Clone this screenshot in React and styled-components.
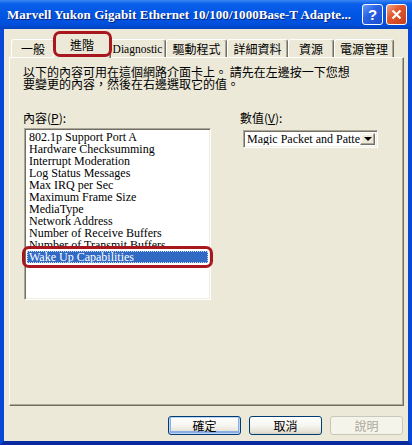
import styled, { createGlobalStyle } from 'styled-components';

const GlobalStyle = createGlobalStyle`
  html, body {
    margin: 0;
    padding: 0;
    background: #ece9d8;
  }
  body {
    font-family: "Noto Sans CJK TC", "Liberation Sans", sans-serif;
  }
`;

const Window = styled.div`
  width: 412px;
  height: 445px;
  display: flex;
  flex-direction: column;
  background: #ece9d8;
`;

const TitleBar = styled.div`
  height: 29px;
  flex: none;
  display: flex;
  align-items: center;
  gap: 3px;
  padding: 0 5px 0 7px;
  box-sizing: border-box;
  background: linear-gradient(
    to bottom,
    #3a86f4 0px,
    #0a5fea 4px,
    #0056e4 14px,
    #0050dc 24px,
    #0142be 29px
  );
`;

const Title = styled.div`
  flex: 1;
  min-width: 0;
  color: #fff;
  font-family: "Liberation Serif", serif;
  font-weight: bold;
  font-size: 13px;
  letter-spacing: 0.05px;
  white-space: nowrap;
  overflow: hidden;
  text-shadow: 1px 1px 0 #0a2478;
`;

const CaptionButton = styled.div`
  width: 21px;
  height: 21px;
  flex: none;
  box-sizing: border-box;
  border: 1px solid #fff;
  border-radius: 3px;
  display: flex;
  align-items: center;
  justify-content: center;
  color: #fff;
  font-family: "Liberation Sans", sans-serif;
  font-weight: bold;
  font-size: 15px;
  background: ${(p) =>
    p.$close
      ? 'linear-gradient(135deg, #f3a488 0%, #e1582f 40%, #c63e19 100%)'
      : 'linear-gradient(135deg, #6c9cf6 0%, #2a62e6 40%, #1a4cd0 100%)'};
`;

const Frame = styled.div`
  flex: 1;
  display: flex;
  flex-direction: column;
  padding: 4px 4px 0 5px;
  border-left: 4px solid #0848d6;
  border-right: 4px solid #0848d6;
  border-bottom: 4px solid #0a2aa0;
`;

const TabStrip = styled.div`
  height: 24px;
  display: flex;
  align-items: flex-end;
  padding-left: 2px;
`;

const Tab = styled.div`
  position: relative;
  box-sizing: border-box;
  width: ${(p) => p.$width + (p.$active ? 4 : 0)}px;
  height: ${(p) => (p.$active ? 25 : 18)}px;
  margin: ${(p) => (p.$active ? '0 -2px -1px' : '0')};
  z-index: ${(p) => (p.$active ? 1 : 0)};
  padding-bottom: ${(p) => (p.$active ? 3 : 0)}px;
  display: flex;
  align-items: center;
  justify-content: center;
  background: #ece9d8;
  border-top: 1px solid #fff;
  border-left: 1px solid #fff;
  border-right: 1px solid #716f64;
  border-radius: 3px 3px 0 0;
  box-shadow: inset -1px 0 0 #aca899;
  font-family: ${(p) =>
    p.$latin ? '"Liberation Serif", serif' : '"Noto Sans CJK TC", sans-serif'};
  font-size: ${(p) => (p.$latin ? 11.5 : 12)}px;
  line-height: 12px;
  color: #000;
  white-space: nowrap;

  ${(p) =>
    p.$marked &&
    `
    &::after {
      content: '';
      position: absolute;
      top: -3px;
      bottom: 1px;
      left: -1px;
      right: -2px;
      border: 3px solid #a8161e;
      border-radius: 7px;
    }
  `}
`;

const Panel = styled.div`
  flex: 1;
  box-sizing: border-box;
  padding: 8px 13px;
  border-top: 1px solid #fff;
  border-left: 1px solid #fff;
  border-right: 1px solid #716f64;
  border-bottom: 1px solid #716f64;
  box-shadow: inset -1px -1px 0 #aca899;
`;

const Intro = styled.p`
  margin: 0;
  font-size: 12px;
  line-height: 12px;
  color: #000;
`;

const Columns = styled.div`
  display: grid;
  grid-template-columns: 188px 1fr;
  column-gap: 29px;
  margin-top: 22px;
`;

const Column = styled.div`
  display: flex;
  flex-direction: column;
  align-items: flex-start;
`;

const Label = styled.div`
  font-size: 12px;
  line-height: 12px;
  color: #000;

  u {
    text-underline-offset: 1px;
  }
`;

const ListBox = styled.div`
  width: 187px;
  height: 172px;
  box-sizing: border-box;
  margin: 4px 0 0 1px;
  padding: 2px;
  background: #fff;
  border-top: 1px solid #aca899;
  border-left: 1px solid #aca899;
  border-right: 1px solid #fff;
  border-bottom: 1px solid #fff;
  box-shadow: inset 1px 1px 0 #716f64, inset -1px -1px 0 #f1efe2;
  display: flex;
  flex-direction: column;
`;

const ListItem = styled.div`
  position: relative;
  height: 12px;
  line-height: 12px;
  padding-left: 2px;
  font-family: "Liberation Serif", serif;
  font-size: 12px;
  white-space: nowrap;
  color: ${(p) => (p.$selected ? '#fff' : '#000')};
  background: ${(p) => (p.$selected ? '#316ac5' : 'transparent')};
  outline: ${(p) => (p.$selected ? '1px dotted #c9d7f0' : 'none')};
  outline-offset: -1px;

  ${(p) =>
    p.$selected &&
    `
    &::after {
      content: '';
      position: absolute;
      top: -5px;
      bottom: -5px;
      left: -5px;
      right: -5px;
      border: 3px solid #a8161e;
      border-radius: 7px;
    }
  `}
`;

const Combo = styled.div`
  width: 135px;
  height: 18px;
  box-sizing: border-box;
  margin: 6px 0 0 3px;
  padding: 2px;
  display: flex;
  background: #fff;
  border-top: 1px solid #aca899;
  border-left: 1px solid #aca899;
  border-right: 1px solid #fff;
  border-bottom: 1px solid #fff;
  box-shadow: inset 1px 1px 0 #716f64, inset -1px -1px 0 #f1efe2;
`;

const ComboText = styled.div`
  flex: 1;
  min-width: 0;
  overflow: hidden;
  white-space: nowrap;
  padding-left: 1px;
  font-family: "Liberation Serif", serif;
  font-size: 12px;
  line-height: 12px;
  color: #000;
`;

const ComboArrow = styled.div`
  width: 15px;
  flex: none;
  box-sizing: border-box;
  display: flex;
  align-items: center;
  justify-content: center;
  background: #ece9d8;
  border-top: 1px solid #f1efe2;
  border-left: 1px solid #f1efe2;
  border-right: 1px solid #716f64;
  border-bottom: 1px solid #716f64;
  box-shadow: inset -1px -1px 0 #aca899, inset 1px 1px 0 #fff;

  &::before {
    content: '';
    border-left: 4px solid transparent;
    border-right: 4px solid transparent;
    border-top: 4px solid #000;
  }
`;

const ButtonRow = styled.div`
  display: flex;
  justify-content: flex-end;
  gap: 8px;
  padding: 10px 1px 6px 0;
`;

const Button = styled.button`
  width: 73px;
  height: 19px;
  padding: 0;
  box-sizing: border-box;
  border: 1px solid ${(p) => (p.disabled ? '#c9c7ba' : '#003c74')};
  border-radius: 3px;
  background: ${(p) =>
    p.disabled
      ? '#f5f4ea'
      : 'linear-gradient(to bottom, #ffffff 0%, #f6f5f0 50%, #e6e3d6 85%, #d6d0c5 100%)'};
  box-shadow: ${(p) =>
    p.$default ? 'inset 0 0 0 1px #bcd4f6, inset 0 -1px 0 2px #89ade4' : 'none'};
  font-family: "Noto Sans CJK TC", sans-serif;
  font-size: 12px;
  line-height: 12px;
  color: ${(p) => (p.disabled ? '#aca899' : '#000')};
`;

const tabs = [
  { label: '一般', width: 44 },
  { label: '進階', width: 54, active: true },
  { label: 'Diagnostic', width: 57, latin: true },
  { label: '驅動程式', width: 61 },
  { label: '詳細資料', width: 61 },
  { label: '資源', width: 46 },
  { label: '電源管理', width: 60 },
];

const items = [
  '802.1p Support Port A',
  'Hardware Checksumming',
  'Interrupt Moderation',
  'Log Status Messages',
  'Max IRQ per Sec',
  'Maximum Frame Size',
  'MediaType',
  'Network Address',
  'Number of Receive Buffers',
  'Number of Transmit Buffers',
  'Wake Up Capabilities',
];

const App = () => {
  return (
    <>
      <GlobalStyle />
      <Window>
        <TitleBar>
          <Title>Marvell Yukon Gigabit Ethernet 10/100/1000Base-T Adapte...</Title>
          <CaptionButton>?</CaptionButton>
          <CaptionButton $close>
            <svg width='11' height='11' viewBox='0 0 11 11'>
              <path d='M1.5 1.5 L9.5 9.5 M9.5 1.5 L1.5 9.5' stroke='#fff' strokeWidth='2.2' />
            </svg>
          </CaptionButton>
        </TitleBar>

        <Frame>
          <TabStrip>
            {tabs.map((t) => (
              <Tab
                key={t.label}
                $width={t.width}
                $active={t.active}
                $marked={t.active}
                $latin={t.latin}>
                {t.label}
              </Tab>
            ))}
          </TabStrip>

          <Panel>
            <Intro>
              以下的內容可用在這個網路介面卡上。 請先在左邊按一下您想
              <br />
              要變更的內容，然後在右邊選取它的值。
            </Intro>

            <Columns>
              <Column>
                <Label>
                  內容(<u>P</u>):
                </Label>
                <ListBox>
                  {items.map((item, i) => (
                    <ListItem key={item} $selected={i === items.length - 1}>
                      {item}
                    </ListItem>
                  ))}
                </ListBox>
              </Column>

              <Column>
                <Label>
                  數值(<u>V</u>):
                </Label>
                <Combo>
                  <ComboText>Magic Packet and Pattern</ComboText>
                  <ComboArrow />
                </Combo>
              </Column>
            </Columns>
          </Panel>

          <ButtonRow>
            <Button $default>確定</Button>
            <Button>取消</Button>
            <Button disabled>說明</Button>
          </ButtonRow>
        </Frame>
      </Window>
    </>
  );
};

export default App;
